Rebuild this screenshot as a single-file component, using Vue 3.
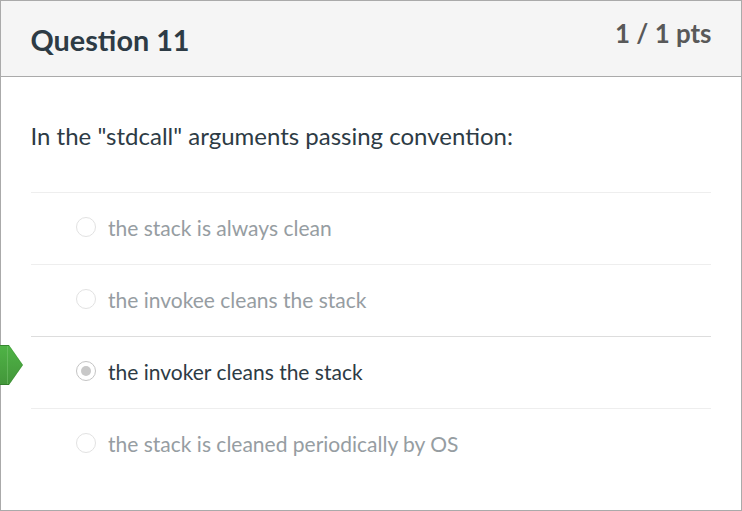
<script setup>
const answers = [
  { text: 'the stack is always clean' },
  { text: 'the invokee cleans the stack' },
  { text: 'the invoker cleans the stack', selected: true },
  { text: 'the stack is cleaned periodically by OS' },
]
</script>

<template>
  <section class="question">
    <header class="header">
      <h2 class="name">Question 11</h2>
      <span class="points">1 / 1 pts</span>
    </header>
    <div class="body">
      <p class="prompt">In the "stdcall" arguments passing convention:</p>
      <div v-for="a in answers" :key="a.text" class="answer" :class="{ selected: a.selected }">
        <svg v-if="a.selected" class="arrow" width="24" height="42" viewBox="0 0 24 42">
          <defs>
            <linearGradient id="green" x1="0" y1="0" x2="0" y2="1">
              <stop offset="0" stop-color="#4fb446" />
              <stop offset="1" stop-color="#43963a" />
            </linearGradient>
          </defs>
          <path d="M0 1H9L23 21L9 41H0Z" fill="url(#green)" />
          <path d="M8.8 1.5L22.4 21L8.8 40.5" fill="none" stroke="#33822c" stroke-opacity=".25" />
          <path d="M0 1.5H9M0 40.5H9" stroke="#2c7526" stroke-opacity=".7" />
          <path d="M7.5 2V40" stroke="#7cc574" stroke-opacity=".5" />
        </svg>
        <span class="radio"></span>
        <span class="label">{{ a.text }}</span>
      </div>
    </div>
  </section>
</template>

<style>
body { margin: 0; background: #fff; }
</style>
<style scoped>
.question { box-sizing: border-box; width: 742px; height: 511px; border: 1px solid #aaa; font-family: Lato, sans-serif; color: #2d3b45; }
.header { box-sizing: border-box; height: 76px; padding: 0 29.5px; background: #f5f5f5; border-bottom: 1px solid #aaa; display: flex; justify-content: space-between; }
.name { margin: 0; font-size: 28.8px; line-height: 78px; font-weight: 700; }
.points { font-size: 25.9px; line-height: 65px; font-weight: 700; color: #595959; }
.body { padding: 0 30px 0 29.5px; }
.prompt { margin: 0; padding-top: 41px; height: 74px; font-size: 24px; line-height: 36px; white-space: nowrap; }
.answer { position: relative; box-sizing: border-box; height: 72px; margin-left: .5px; border-top: 1px solid #eee; padding-left: 45px; display: flex; align-items: center; font-size: 21px; color: #969da2; }
.answer.selected { border-color: #ddd; color: #2d3b45; }
.radio { box-sizing: border-box; width: 20px; height: 20px; margin: -3px 12px 0 0; border: 1px solid #e2e2e2; border-radius: 50%; display: flex; align-items: center; justify-content: center; }
.selected .radio { border-color: #c4c4c4; }
.selected .radio::after { content: ''; width: 10px; height: 10px; border-radius: 50%; background: #c8c8c8; }
.label { line-height: 26px; margin-top: -1px; white-space: nowrap; }
.arrow { position: absolute; left: -31px; top: 7px; }
</style>
